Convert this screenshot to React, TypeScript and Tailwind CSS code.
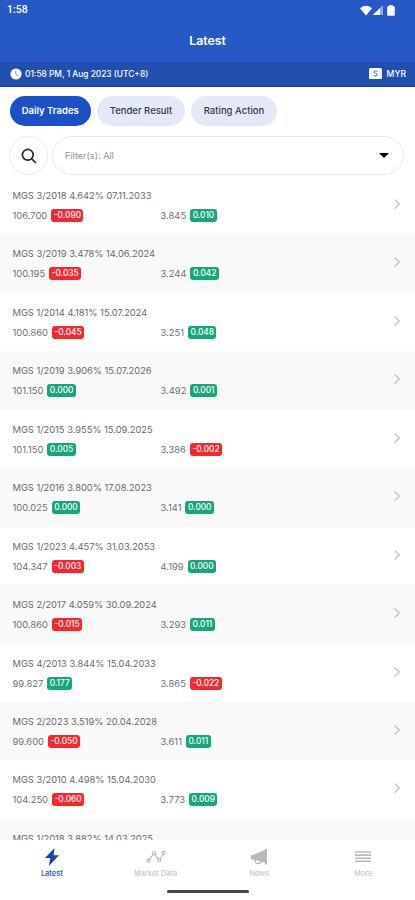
type Trade = [string, string, string, string, string];

const trades: Trade[] = [
  ['MGS 3/2018 4.642% 07.11.2033', '106.700', '-0.090', '3.845', '0.010'],
  ['MGS 3/2019 3.478% 14.06.2024', '100.195', '-0.035', '3.244', '0.042'],
  ['MGS 1/2014 4.181% 15.07.2024', '100.860', '-0.045', '3.251', '0.048'],
  ['MGS 1/2019 3.906% 15.07.2026', '101.150', '0.000', '3.492', '0.001'],
  ['MGS 1/2015 3.955% 15.09.2025', '101.150', '0.005', '3.386', '-0.002'],
  ['MGS 1/2016 3.800% 17.08.2023', '100.025', '0.000', '3.141', '0.000'],
  ['MGS 1/2023 4.457% 31.03.2053', '104.347', '-0.003', '4.199', '0.000'],
  ['MGS 2/2017 4.059% 30.09.2024', '100.860', '-0.015', '3.293', '0.011'],
  ['MGS 4/2013 3.844% 15.04.2033', '99.827', '0.177', '3.865', '-0.022'],
  ['MGS 2/2023 3.519% 20.04.2028', '99.600', '-0.050', '3.611', '0.011'],
  ['MGS 3/2010 4.498% 15.04.2030', '104.250', '-0.060', '3.773', '0.009'],
];

function Value({ value, change }: { value: string; change: string }) {
  const color = change.startsWith('-') ? 'bg-[#f72730]' : 'bg-[#16a679]';
  return (
    <div className="flex items-center gap-[4px]">
      <span className="text-[9.4px] text-[#707070]">{value}</span>
      <span className={`flex h-[13px] items-center rounded-[3px] px-[2.5px] text-[8.3px] font-medium text-white ${color}`}>
        {change}
      </span>
    </div>
  );
}

function Row({ trade, shaded }: { trade: Trade; shaded: boolean }) {
  const [name, price, priceChange, yieldValue, yieldChange] = trade;
  return (
    <div className={`flex h-[58.45px] shrink-0 items-start pl-[12.5px] pr-[14px] pt-[13px] ${shaded ? 'bg-[#f9f9f9]' : 'bg-white'}`}>
      <div className="flex flex-1 flex-col">
        <div className="h-[13px] whitespace-nowrap text-[9.3px] leading-[13px] text-[#6a6a6a]">{name}</div>
        <div className="mt-[7px] flex h-[13px] items-center leading-[13px]">
          <div className="w-[148px]">
            <Value value={price} change={priceChange} />
          </div>
          <Value value={yieldValue} change={yieldChange} />
        </div>
      </div>
      <svg className="mt-[9px] h-[12px] w-[8px]" viewBox="0 0 8 12" fill="none" stroke="#c4c4c4" strokeWidth="1.4">
        <path d="M1.5 1.5 6.3 6 1.5 10.7" />
      </svg>
    </div>
  );
}

function Header() {
  return (
    <header className="shrink-0 text-white">
      <div className="h-[62px] bg-[#2659c6]">
        <div className="flex h-[20px] items-center justify-between pl-[7px] pr-[20px]">
          <span className="text-[10.5px] font-medium font-['Roboto',sans-serif]">1:58</span>
          <div className="flex items-center">
            <svg className="h-[11px] w-[12px]" viewBox="0 0 12 11" fill="white">
              <path d="M0 3.2Q6-1.7 12 3.2L6 10.5Z" />
            </svg>
            <svg className="ml-px h-[11px] w-[10px]" viewBox="0 0 10 11">
              <path d="M0 10 10 0V10Z" fill="#91abe0" />
              <path d="M0 10 7 3V10Z" fill="white" />
            </svg>
            <svg className="ml-[4px] h-[11px] w-[8px]" viewBox="0 0 8 11" fill="white">
              <path d="M2.3 0h3.4v1.2H7q.8 0 .8.8v8q0 .8-.8.8H1q-.8 0-.8-.8V2q0-.8.8-.8h1.3Z" />
            </svg>
          </div>
        </div>
        <h1 className="pt-[12px] text-center text-[12.3px] font-semibold leading-[18px]">Latest</h1>
      </div>
      <div className="flex h-[25px] items-center justify-between border-b border-[#0d3ca8] bg-[#224fae] pl-[10px] pr-[9px] text-[8.35px] font-medium">
        <div className="flex items-center gap-[3px]">
          <svg className="h-[12px] w-[12px]" viewBox="0 0 12 12">
            <circle cx="6" cy="6" r="5.6" fill="white" />
            <path d="M5.7 2.8V6L8 7.8" fill="none" stroke="#7d97cf" />
          </svg>
          <span className="whitespace-nowrap">01:58 PM, 1 Aug 2023 (UTC+8)</span>
        </div>
        <div className="flex items-center gap-[5px]">
          <svg className="h-[11px] w-[13px]" viewBox="0 0 13 11">
            <rect width="13" height="11" rx="1.5" fill="white" />
            <path d="M8.5 3.4Q6.5 2.2 5 3.5C3.5 5.3 9.5 5 8 7.3Q6.5 8.8 4.5 7.3" fill="none" stroke="#315ab0" strokeWidth=".9" />
          </svg>
          <span className="text-[8.6px]">MYR</span>
        </div>
      </div>
    </header>
  );
}

function Tabs() {
  return (
    <div className="flex shrink-0 gap-[6px] pl-[9.5px] pt-[9px] text-[9.5px] text-[#333849]">
      <div className="flex h-[30px] w-[81.5px] items-center justify-center rounded-full bg-[#1c50c4] font-semibold text-white">Daily Trades</div>
      <div className="flex h-[30px] w-[88px] items-center justify-center rounded-full bg-[#e5e9f7] font-medium">Tender Result</div>
      <div className="flex h-[30px] w-[86px] items-center justify-center rounded-full bg-[#e5e9f7] font-medium">Rating Action</div>
    </div>
  );
}

function Filters() {
  return (
    <div className="flex shrink-0 gap-[4px] pl-[9px] pt-[10px]">
      <div className="flex h-[39px] w-[39px] items-center justify-center rounded-full border border-[#ececec]">
        <svg className="h-[16px] w-[16px]" viewBox="0 0 16 16" fill="none" stroke="#292929" strokeWidth="1.7">
          <circle cx="6.8" cy="6.8" r="5.4" />
          <path d="m10.8 10.8 4.2 4.2" />
        </svg>
      </div>
      <div className="flex h-[39px] w-[352px] items-center justify-between rounded-full border border-[#e8e8e8] pl-[12px] pr-[14px] text-[9.1px] text-[#919191]">
        <span>Filter(s): All</span>
        <svg className="h-[5px] w-[10px]" viewBox="0 0 10 5">
          <path d="M0 0h10L5 5Z" fill="black" />
        </svg>
      </div>
    </div>
  );
}

function BottomNav() {
  const item = 'flex flex-1 flex-col items-center text-[7.5px] leading-[10px] text-[#bdbdbd]';
  return (
    <nav className="h-[60px] shrink-0 bg-white">
      <div className="flex h-[50px] pt-[8px]">
        <div className={`${item} font-medium !text-[#2450bb]`}>
          <svg className="h-[18px] w-[16px]" viewBox="0 0 16 18" fill="#1646bd">
            <path d="M10.5 0 1 10h5.3L4.8 18 15 7.3H9.5Z" />
          </svg>
          <span className="mt-[3px]">Latest</span>
        </div>
        <div className={item}>
          <svg className="h-[18px] w-[20px]" viewBox="0 0 20 18" fill="none" stroke="#b5b5b5" strokeWidth="1.1">
            <path d="m3.5 11.5 3.7-5.1M8.8 6.4l3.6 4.9M14 11.2l3.2-5.2" />
            <circle cx="2.6" cy="12.6" r="1.5" />
            <circle cx="8" cy="5.2" r="1.5" />
            <circle cx="13.2" cy="12.3" r="1.5" />
            <circle cx="17.6" cy="4.8" r="1.5" />
          </svg>
          <span className="mt-[3px]">Market Data</span>
        </div>
        <div className={item}>
          <svg className="h-[18px] w-[18px]" viewBox="0 0 18 18" fill="#b8b8b8">
            <path d="M1 7.2 3 7l12-5V1h2v15.5h-2v-2L3 11.5l-2-.3Z" />
            <path d="M5 11.5q0 4 3 4t3.5-2.5" fill="none" stroke="#b8b8b8" strokeWidth="1.3" />
          </svg>
          <span className="mt-[3px]">News</span>
        </div>
        <div className={item}>
          <svg className="h-[18px] w-[16px]" viewBox="0 0 16 18" stroke="#b9b9b9" strokeWidth="1.6">
            <path d="M0 4h16M0 7.1h16M0 10.2h16M0 13.3h16" />
          </svg>
          <span className="mt-[3px]">More</span>
        </div>
      </div>
      <div className="mx-auto h-[3px] w-[82px] rounded-full bg-[#484848]" />
    </nav>
  );
}

export default function App() {
  return (
    <div className="flex h-[900px] w-[415px] flex-col overflow-hidden bg-white font-['Inter',sans-serif]">
      <Header />
      <Tabs />
      <Filters />
      <main className="flex min-h-0 flex-1 flex-col overflow-hidden pt-[1px]">
        {trades.map((trade, i) => (
          <Row key={trade[0]} trade={trade} shaded={i % 2 === 1} />
        ))}
        <div className="h-[22px] shrink-0 overflow-hidden bg-[#f9f9f9] pl-[12.5px] pt-[13px] text-[9.3px] leading-[13px] text-[#6a6a6a]">
          MGS 1/2018 3.882% 14.03.2025
        </div>
      </main>
      <BottomNav />
    </div>
  );
}
